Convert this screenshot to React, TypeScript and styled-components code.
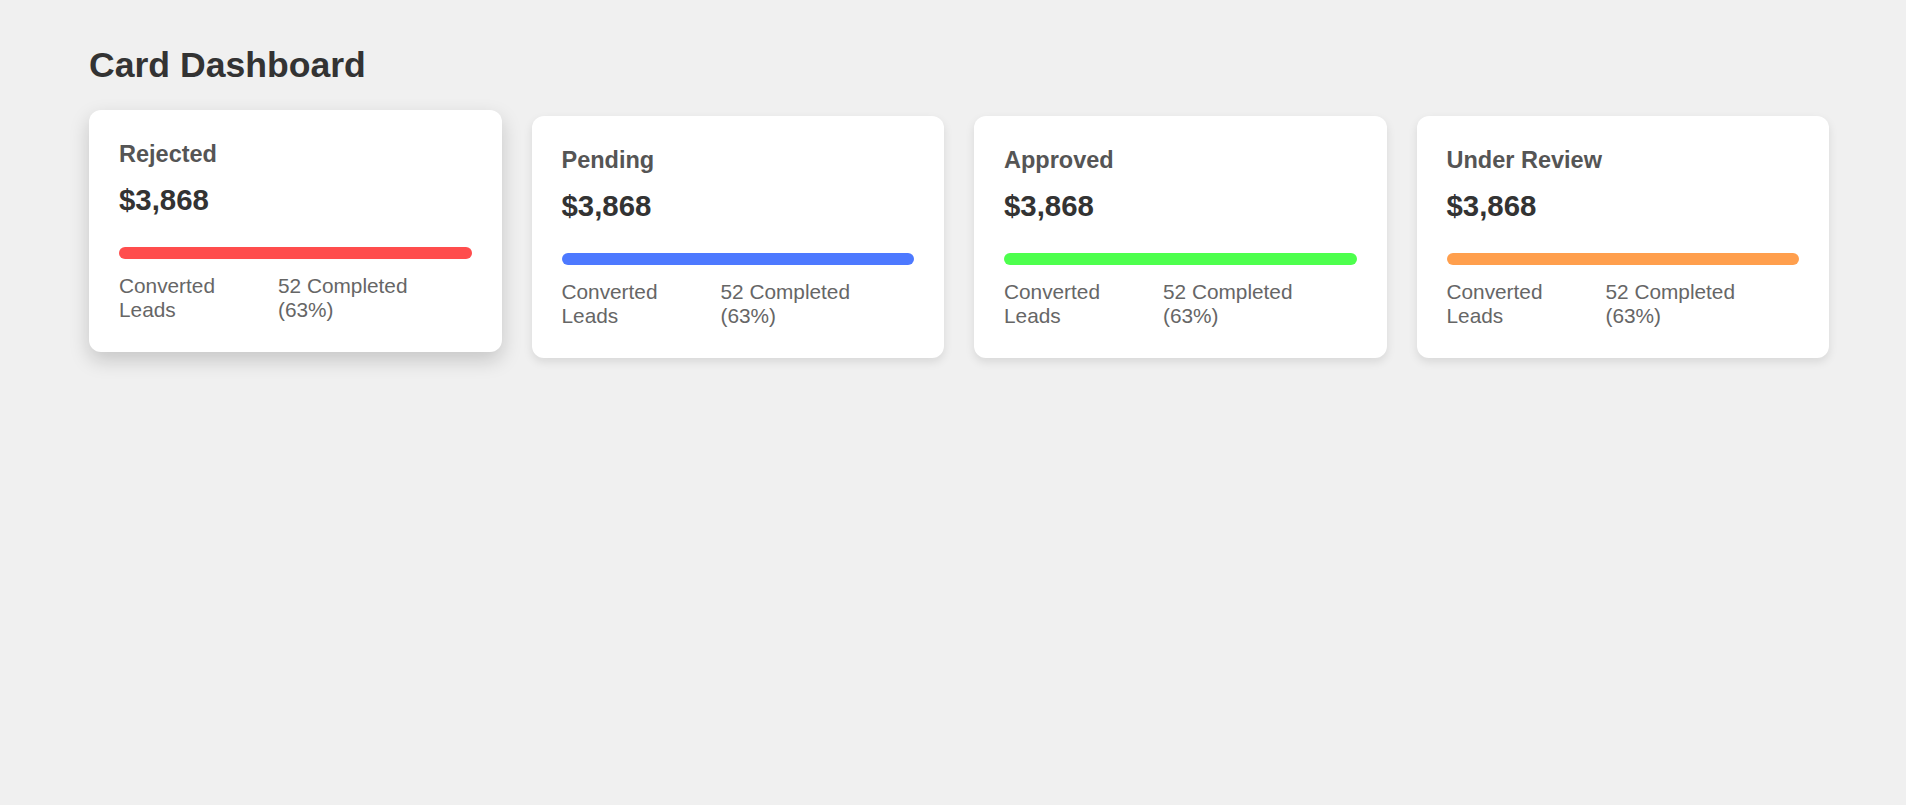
import React from "react";
import styled, { createGlobalStyle, css } from "styled-components";

const GlobalStyle = createGlobalStyle`
  html, body {
    margin: 0;
    padding: 0;
    background: #f0f0f0;
    font-family: "Liberation Sans", Arial, sans-serif;
  }
`;

const Page = styled.main`
  padding: 45px 0 0 89px;
  min-height: 100vh;
  box-sizing: border-box;
`;

const Title = styled.h1`
  margin: 0 0 30px;
  font-size: 35.6px;
  font-weight: 700;
  color: #333;
`;

const Grid = styled.div`
  display: grid;
  width: 1740px;
  grid-template-columns: repeat(4, 1fr);
  gap: 30px;
  align-items: start;
`;

const Card = styled.div<{ $active?: boolean }>`
  background: #fff;
  border-radius: 12px;
  padding: 31px 30px 30px;
  box-shadow: 0 4px 10px rgba(0, 0, 0, 0.1);
  transition: transform 0.2s ease, box-shadow 0.2s ease;

  ${({ $active }) =>
    $active &&
    css`
      transform: translateY(-6px);
      box-shadow: 0 8px 20px rgba(0, 0, 0, 0.18);
    `}
`;

const CardTitle = styled.h3`
  margin: 0 0 15px;
  font-size: 23.5px;
  font-weight: 700;
  color: #555;
`;

const Amount = styled.div`
  margin-bottom: 30px;
  font-size: 29.4px;
  font-weight: 700;
  color: #333;
`;

const Bar = styled.div<{ $color: string }>`
  height: 12px;
  border-radius: 6px;
  margin-bottom: 15px;
  background: ${({ $color }) => $color};
`;

const Footer = styled.div`
  display: grid;
  grid-template-columns: 140px 140px;
  column-gap: 19px;
  font-size: 20.8px;
  color: #666;
`;

const cards = [
  { title: "Rejected", color: "#ff4d4d", active: true },
  { title: "Pending", color: "#4d79ff" },
  { title: "Approved", color: "#4dff4d" },
  { title: "Under Review", color: "#ff9f4d" },
];

export default function App() {
  return (
    <>
      <GlobalStyle />
      <Page>
        <Title>Card Dashboard</Title>
        <Grid>
          {cards.map((c) => (
            <Card key={c.title} $active={c.active}>
              <CardTitle>{c.title}</CardTitle>
              <Amount>$3,868</Amount>
              <Bar $color={c.color} />
              <Footer>
                <span>Converted Leads</span>
                <span>52 Completed (63%)</span>
              </Footer>
            </Card>
          ))}
        </Grid>
      </Page>
    </>
  );
}
